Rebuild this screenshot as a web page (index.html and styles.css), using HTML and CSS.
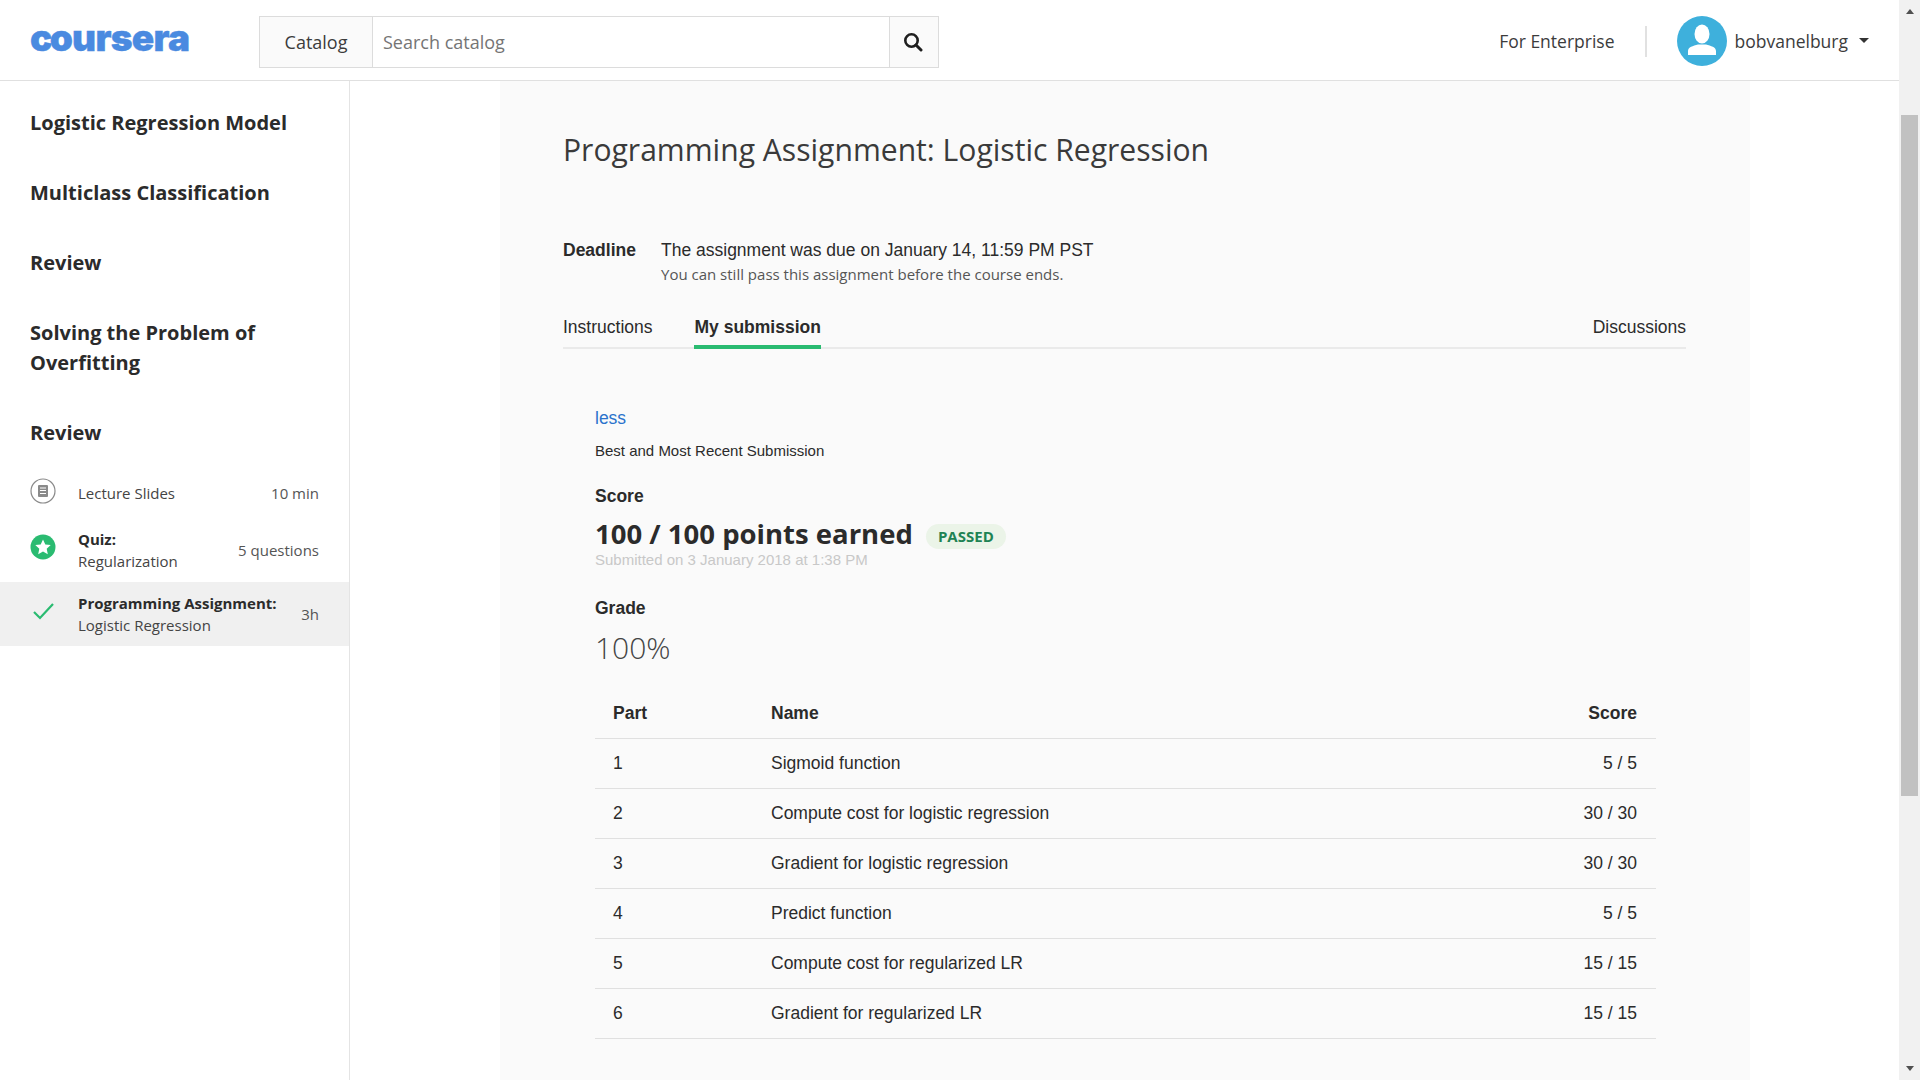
FILE: index.html
```html
<!DOCTYPE html>
<html lang="en">
  <head>
    <meta charset="UTF-8" />
    <meta name="viewport" content="width=device-width, initial-scale=1.0" />
    <title>Programming Assignment: Logistic Regression</title>
    <link rel="stylesheet" href="styles.css">
  </head>
  <body>
    <div class="page">
      <header class="topbar">
        <div class="logo"><span class="logo-c">c</span>oursera</div>
        <div class="search">
          <div class="search-catalog">Catalog</div>
          <div class="search-input">Search catalog</div>
          <div class="search-btn">
            <svg width="20" height="20" viewBox="0 0 20 20">
              <circle cx="8.5" cy="8.5" r="6.2" fill="none" stroke="#1f1f1f" stroke-width="2.6" />
              <path d="M13 13l5 5" stroke="#1f1f1f" stroke-width="3" stroke-linecap="round" />
            </svg>
          </div>
        </div>
        <div class="topbar-right">
          <span class="enterprise">For Enterprise</span>
          <span class="divider"></span>
          <svg class="avatar" width="50" height="50" viewBox="0 0 50 50">
            <circle cx="25" cy="25" r="25" fill="#3eb0dc" />
            <ellipse cx="25" cy="18" rx="7.5" ry="9.5" fill="#fff" />
            <path d="M11 39v-4c0-4 5-5 10-6.500h8c5 1.500 10 2.500 10 6.500v4z" fill="#fff" />
          </svg>
          <span class="username">bobvanelburg</span>
          <span class="caret"></span>
        </div>
      </header>

      <div class="body-row">
        <nav class="sidebar">
          <h3 class="nav-title">Logistic Regression Model</h3>
          <h3 class="nav-title">Multiclass Classification</h3>
          <h3 class="nav-title">Review</h3>
          <h3 class="nav-title">Solving the Problem of Overfitting</h3>
          <h3 class="nav-title">Review</h3>

          <div class="nav-item nav-item-slides">
            <svg class="nav-icon" width="26" height="26" viewBox="0 0 26 26">
              <circle cx="13" cy="13" r="12" fill="#fff" stroke="#8a8a8a" stroke-width="1.200" />
              <rect x="8" y="7" width="10" height="12" rx="1" fill="#8a8a8a" />
              <path d="M10 10h6M10 12.500h6M10 15.500h6" stroke="#fff" stroke-width="1" />
            </svg>
            <div class="nav-text">Lecture Slides</div>
            <div class="nav-meta">10 min</div>
          </div>

          <div class="nav-item nav-item-quiz">
            <svg class="nav-icon" width="26" height="26" viewBox="0 0 26 26">
              <circle cx="13" cy="13" r="12.500" fill="#2abb71" />
              <path d="M13 5.500l2.300 5 5.400.6-4 3.700 1.100 5.400-4.800-2.700-4.800 2.700 1.100-5.400-4-3.700 5.400-.6z" fill="#fff" />
            </svg>
            <div class="nav-text"><b>Quiz:</b><br />Regularization</div>
            <div class="nav-meta">5 questions</div>
          </div>

          <div class="nav-item nav-item-active">
            <svg class="nav-icon" width="26" height="26" viewBox="0 0 26 26">
              <path d="M4 14l6 6L23 6" fill="none" stroke="#2abb71" stroke-width="2.200" />
            </svg>
            <div class="nav-text"><b>Programming Assignment:</b><br />Logistic Regression</div>
            <div class="nav-meta">3h</div>
          </div>
        </nav>

        <main class="content">
          <h1 class="title">Programming Assignment: Logistic Regression</h1>

          <div class="deadline">
            <div class="deadline-label">Deadline</div>
            <div>
              <div class="deadline-text">The assignment was due on January 14, 11:59 PM PST</div>
              <div class="deadline-sub">You can still pass this assignment before the course ends.</div>
            </div>
          </div>

          <div class="tabs">
            <div class="tab">Instructions</div>
            <div class="tab tab-active">My submission</div>
            <div class="tab tab-right">Discussions</div>
          </div>

          <section class="submission">
            <a class="less">less</a>
            <div class="best">Best and Most Recent Submission</div>
            <div class="label label-score">Score</div>
            <div class="points">
              <span>100 / 100 points earned</span>
              <span class="passed">PASSED</span>
            </div>
            <div class="submitted">Submitted on 3 January 2018 at 1:38 PM</div>
            <div class="label label-grade">Grade</div>
            <div class="grade">100%</div>

            <table class="parts">
              <thead>
                <tr><th class="col-part">Part</th><th>Name</th><th class="col-score">Score</th></tr>
              </thead>
              <tbody>
                <tr><td>1</td><td>Sigmoid function</td><td class="col-score">5 / 5</td></tr>
                <tr><td>2</td><td>Compute cost for logistic regression</td><td class="col-score">30 / 30</td></tr>
                <tr><td>3</td><td>Gradient for logistic regression</td><td class="col-score">30 / 30</td></tr>
                <tr><td>4</td><td>Predict function</td><td class="col-score">5 / 5</td></tr>
                <tr><td>5</td><td>Compute cost for regularized LR</td><td class="col-score">15 / 15</td></tr>
                <tr><td>6</td><td>Gradient for regularized LR</td><td class="col-score">15 / 15</td></tr>
              </tbody>
            </table>
          </section>
        </main>
      </div>
    </div>

    <div class="scrollbar">
      <span class="arrow-up"></span>
      <span class="thumb"></span>
      <span class="arrow-down"></span>
    </div>
  </body>
</html>
```

FILE: styles.css
```css
html,
body {
  margin: 0;
  padding: 0;
  height: 100%;
  overflow: hidden;
}

body {
  display: flex;
  font-family: "Liberation Sans", Arial, sans-serif;
  color: #2b2b2b;
  background-color: #fff;
}

.page {
  flex: 1;
  display: flex;
  flex-direction: column;
  min-width: 0;
}

/* top bar */
.topbar {
  height: 80px;
  flex: none;
  display: flex;
  align-items: center;
  border-bottom: 1px solid #e0e0e0;
  padding-left: 30px;
  font-family: "Open Sans", sans-serif;
}

.logo {
  width: 229px;
  font-family: "Inter", sans-serif;
  font-weight: 900;
  font-size: 37px;
  line-height: 40px;
  letter-spacing: -0.7px;
  color: #4a8ae0;
  -webkit-text-stroke: 0.4px #4a8ae0;
  margin-top: -5px;
}

.logo-c {
  margin-right: -2px;
}

.search {
  width: 680px;
  height: 52px;
  display: flex;
  border: 1px solid #dcdcdc;
  box-sizing: border-box;
  font-size: 18px;
  margin-top: 4px;
}

.search-catalog {
  width: 112px;
  background-color: #fafafa;
  border-right: 1px solid #dcdcdc;
  display: flex;
  align-items: center;
  justify-content: center;
  color: #3c3c3c;
}

.search-input {
  flex: 1;
  padding-left: 10px;
  display: flex;
  align-items: center;
  color: #757575;
}

.search-btn {
  width: 49px;
  background-color: #fafafa;
  border-left: 1px solid #dcdcdc;
  display: flex;
  align-items: center;
  justify-content: center;
  padding-right: 2px;
  box-sizing: border-box;
}

.topbar-right {
  margin-left: auto;
  display: flex;
  align-items: center;
  font-size: 17.5px;
  color: #3c3c3c;
  padding: 2px 30px 0 0;
}

.divider {
  width: 2px;
  height: 31px;
  background-color: #e1e1e1;
  margin: 0 30px;
}

.username {
  margin-left: 8px;
}

.caret {
  width: 0;
  height: 0;
  border-left: 5px solid transparent;
  border-right: 5px solid transparent;
  border-top: 5px solid #333;
  margin-left: 11px;
  margin-top: -2px;
}

.body-row {
  flex: 1;
  display: flex;
  min-height: 0;
}

/* left nav */
.sidebar {
  width: 349px;
  flex: none;
  box-sizing: content-box;
  border-right: 1px solid #e4e4e4;
  font-family: "Open Sans", sans-serif;
  padding-top: 12px;
}

.nav-title {
  margin: 0;
  padding: 15px 30px 25px;
  font-size: 20px;
  line-height: 30px;
  font-weight: 700;
  color: #2b2b2b;
}

.nav-item {
  display: flex;
  align-items: center;
  padding: 0 30px;
  font-size: 15px;
  line-height: 22px;
  color: #444;
}

.nav-item b {
  color: #2b2b2b;
}

.nav-item-slides {
  height: 47px;
  margin-top: -4px;
}

.nav-item-quiz {
  height: 64px;
  margin-top: 2px;
}

.nav-item-active {
  height: 64px;
  background-color: #f0f0f0;
}

.nav-icon {
  flex: none;
  margin-right: 22px;
}

.nav-item-slides .nav-icon {
  margin-top: -4px;
}

.nav-item-quiz .nav-icon {
  margin-top: -6px;
}

.nav-item-active .nav-icon {
  margin-top: -6px;
}

.nav-meta {
  margin-left: auto;
  color: #555;
}

/* main panel */
.content {
  width: 1250px;
  box-sizing: border-box;
  margin-left: 150px;
  padding: 0 64px 0 63px;
  background-color: #fafafa;
  height: 100%;
}

.title {
  margin: 0;
  padding-top: 48px;
  font-family: "Open Sans", sans-serif;
  font-size: 30.1px;
  line-height: 42px;
  font-weight: 400;
  color: #3a3a3a;
}

.deadline {
  display: flex;
  margin-top: 67px;
}

.deadline-label {
  width: 98px;
  font-weight: 700;
  font-size: 17.5px;
  line-height: 24px;
}

.deadline-text {
  font-size: 17.5px;
  line-height: 24px;
}

.deadline-sub {
  font-family: "Open Sans", sans-serif;
  font-size: 15px;
  line-height: 20px;
  margin-top: 2px;
  color: #555;
}

.tabs {
  display: flex;
  height: 43px;
  margin-top: 22px;
  border-bottom: 2px solid #eaeaea;
  font-size: 17.5px;
  line-height: 42px;
  box-sizing: border-box;
}

.tab {
  margin-right: 42px;
  height: 43px;
  box-sizing: border-box;
}

.tab-active {
  font-weight: 700;
  border-bottom: 4px solid #2abb71;
}

.tab-right {
  margin-left: auto;
  margin-right: 0;
}

.submission {
  padding: 0 30px 0 32px;
}

.less {
  display: block;
  margin-top: 57px;
  font-size: 17.5px;
  line-height: 24px;
  color: #2a73cc;
}

.best {
  margin-top: 11px;
  font-size: 15px;
  line-height: 20px;
}

.label {
  font-weight: 700;
  font-size: 17.5px;
  line-height: 24px;
}

.label-score {
  margin-top: 23px;
}

.label-grade {
  margin-top: 27px;
}

.points {
  display: flex;
  align-items: center;
  gap: 13px;
  font-family: "Open Sans", sans-serif;
  font-weight: 700;
  font-size: 27.5px;
  line-height: 36px;
  margin-top: 8px;
}

.passed {
  width: 80px;
  height: 25px;
  margin-top: 4px;
  border-radius: 13px;
  background-color: #ebf4e8;
  color: #1f8354;
  font-size: 15px;
  line-height: 25px;
  text-align: center;
}

.submitted {
  font-size: 15px;
  line-height: 18px;
  margin-top: -1px;
  color: #c8c8c8;
}

.grade {
  font-family: "Open Sans", sans-serif;
  font-weight: 300;
  font-size: 30px;
  line-height: 40px;
  margin-top: 8px;
  color: #444;
}

.parts {
  width: 100%;
  border-collapse: collapse;
  margin-top: 23px;
  font-size: 17.5px;
}

.parts th,
.parts td {
  height: 50px;
  padding: 1px 19px 0 18px;
  box-sizing: border-box;
  text-align: left;
  border-bottom: 1px solid #e0e0e0;
}

.parts td:first-child,
.parts th:first-child {
  width: 158px;
  padding-right: 0;
}

.parts th {
  height: 47px;
  font-weight: 700;
  padding: 0 19px 2px 18px;
}

.parts .col-score {
  text-align: right;
}

/* fake browser scrollbar */
.scrollbar {
  width: 21px;
  flex: none;
  background-color: #f1f1f1;
  display: flex;
  flex-direction: column;
  align-items: center;
}

.arrow-up {
  width: 0;
  height: 0;
  margin-top: 9px;
  border-left: 4px solid transparent;
  border-right: 4px solid transparent;
  border-bottom: 5px solid #505050;
}

.thumb {
  width: 17px;
  height: 681px;
  margin-top: 101px;
  background-color: #c1c1c1;
}

.arrow-down {
  width: 0;
  height: 0;
  margin-top: auto;
  margin-bottom: 9px;
  border-left: 4px solid transparent;
  border-right: 4px solid transparent;
  border-top: 5px solid #505050;
}
```
